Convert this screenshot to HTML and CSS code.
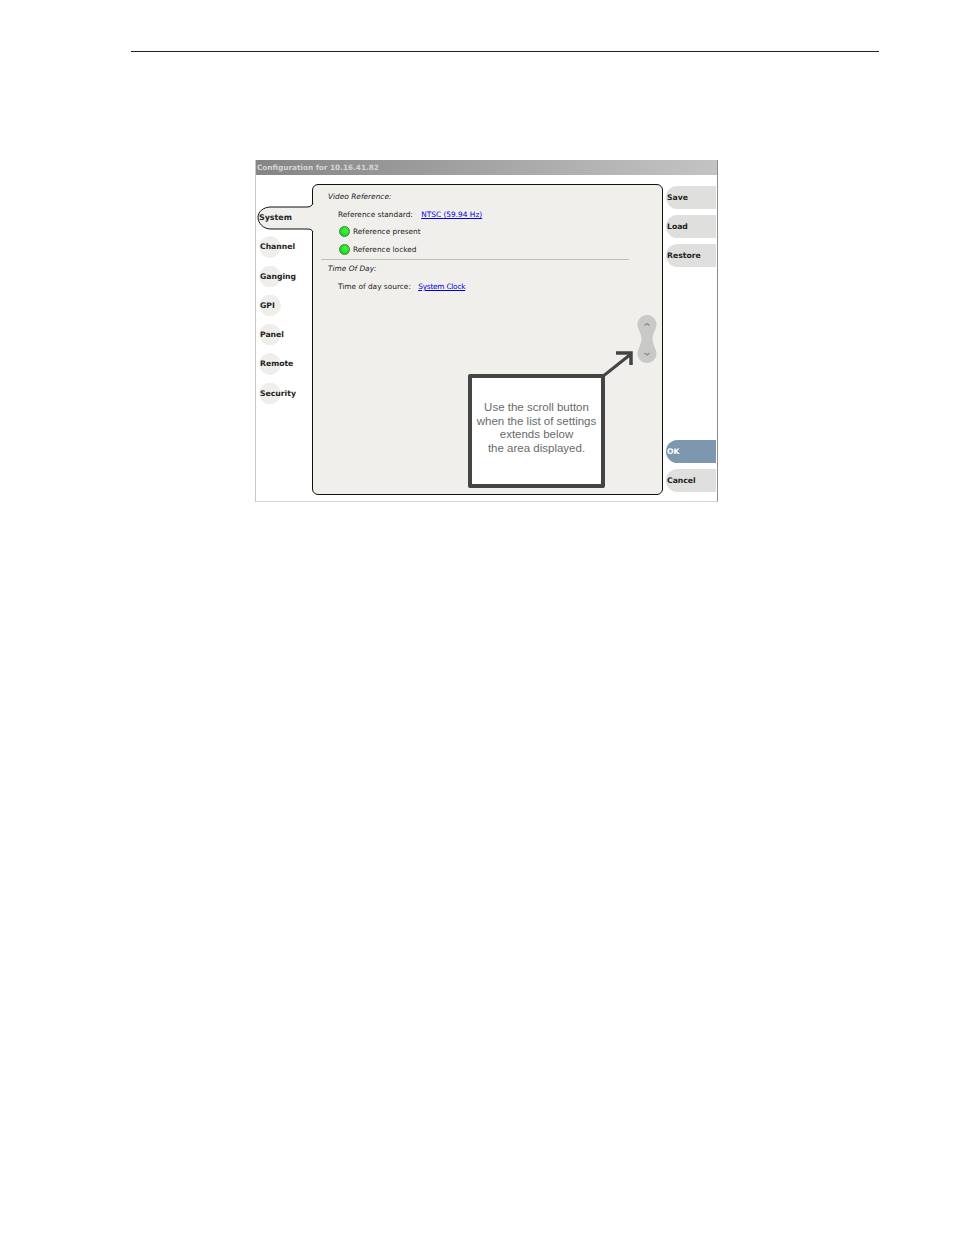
FILE: index.html
```html
<!DOCTYPE html>
<html lang="en">
<head>
  <meta charset="UTF-8" />
  <title>Configuration</title>
  <link rel="stylesheet" href="styles.css">
</head>
<body>
  <div class="page-rule"></div>
  <div class="window">
    <div class="titlebar">Configuration for 10.16.41.82</div>
    <div class="window-body">
      <ul class="nav">
        <li class="nav-item nav-active">System</li>
        <li class="nav-item">Channel</li>
        <li class="nav-item">Ganging</li>
        <li class="nav-item">GPI</li>
        <li class="nav-item">Panel</li>
        <li class="nav-item">Remote</li>
        <li class="nav-item">Security</li>
      </ul>
      <div class="panel">
        <!-- active tab joins the panel edge -->
        <svg class="tab-shape" width="58" height="30" viewBox="0 0 58 30">
          <path d="M56 1 C55 4 53 5 50 5 L14 5 C6 5 1 10 1 15 C1 21 6 27 14 27 L50 27 C54 27 55 28 56 30 L58 30 L58 1 Z" fill="#f0efec"/>
          <path d="M56 1 C55 4 53 5 50 5 L14 5 C6 5 1 10 1 15 C1 21 6 27 14 27 L50 27 C54 27 55 28 56 30" fill="none" stroke="#111" stroke-width="1"/>
        </svg>
        <div class="tab-label">System</div>

        <div class="row heading">Video Reference:</div>
        <div class="row setting">Reference standard: <a class="value-link link-standard" href="#">NTSC (59.94 Hz)</a></div>
        <div class="row status"><span class="led"></span>Reference present</div>
        <div class="row status"><span class="led"></span>Reference locked</div>
        <div class="divider"></div>
        <div class="row heading heading-second">Time Of Day:</div>
        <div class="row setting">Time of day source: <a class="value-link link-clock" href="#">System Clock</a></div>

        <svg class="scroll-btn" width="20" height="48" viewBox="0 0 20 48">
          <path d="M10 0 C15.5 0 19.5 4.5 19.5 9.5 C19.5 14 16 17 15.5 24 C16 31 19.5 34 19.5 38.5 C19.5 43.5 15.5 48 10 48 C4.5 48 0.5 43.5 0.5 38.5 C0.5 34 4 31 4.5 24 C4 17 0.5 14 0.5 9.5 C0.5 4.5 4.5 0 10 0 Z" fill="#c9c9c7"/>
          <path d="M7.5 10.5 L10 8.5 L12.5 10.5" fill="none" stroke="#8a8a88" stroke-width="1.3"/>
          <path d="M7.5 38 L10 40 L12.5 38" fill="none" stroke="#8a8a88" stroke-width="1.3"/>
        </svg>
        <svg class="callout-arrow" width="36" height="28" viewBox="0 0 36 28">
          <path d="M2 26 L31 3" fill="none" stroke="#444" stroke-width="3"/>
          <path d="M16 2 L31 2 L31 14" fill="none" stroke="#444" stroke-width="3.5"/>
        </svg>
        <div class="callout">Use the scroll button<br>when the list of settings<br>extends below<br>the area displayed.</div>
      </div>
      <div class="actions">
        <button class="action">Save</button>
        <button class="action">Load</button>
        <button class="action">Restore</button>
        <button class="action action-ok">OK</button>
        <button class="action">Cancel</button>
      </div>
    </div>
  </div>
</body>
</html>
```

FILE: styles.css
```css
body {
  margin: 0;
  padding-top: 51px;
  background: #fff;
  font-family: "DejaVu Sans", sans-serif;
  color: #222;
}
.page-rule {
  height: 1px;
  margin: 0 75px 0 131px;
  background: #222;
}
.window {
  box-sizing: border-box;
  width: 463px;
  height: 342px;
  margin: 108px 0 0 255px;
  border-left: 1px solid #c8c8c8;
  border-right: 1px solid #8c8c8c;
  border-bottom: 1px solid #d4d4d4;
}
.titlebar {
  height: 15px;
  padding-left: 1px;
  line-height: 16px;
  font-size: 7.3px;
  font-weight: bold;
  color: #d4d4d4;
  background: linear-gradient(90deg, #858585, #c4c4c4);
  white-space: nowrap;
}
.window-body {
  display: flex;
  padding-top: 9px;
}
/* left tabs */
.nav {
  list-style: none;
  width: 56px;
  margin: 0;
  padding: 19px 0 0;
}
.nav-item {
  height: 29.3px;
  padding-left: 4px;
  line-height: 29.3px;
  font-size: 7.7px;
  font-weight: bold;
  background: radial-gradient(circle 11px at 14px 50%, #efeeeb 10.5px, transparent 11px);
}
.nav-active {
  visibility: hidden;
}
.panel {
  box-sizing: border-box;
  position: relative;
  width: 351px;
  height: 311px;
  padding-top: 2px;
  background: #f0efec;
  border: 1px solid #111;
  border-radius: 6px;
  font-size: 7.4px;
}
.tab-shape {
  position: absolute;
  left: -56px;
  top: 17px;
}
.tab-label {
  position: absolute;
  left: -54px;
  top: 27px;
  font-size: 7.9px;
  font-weight: bold;
  line-height: 12px;
}
.row {
  height: 18px;
  line-height: 20px;
  white-space: nowrap;
}
.heading {
  padding-left: 15px;
  font-style: italic;
}
.heading-second {
  height: 16px;
  margin-bottom: 1px;
  line-height: 18px;
}
.setting {
  padding-left: 25px;
}
.value-link {
  color: #0000e0;
}
.link-standard {
  margin-left: 6px;
}
.link-clock {
  margin-left: 5px;
  letter-spacing: -0.25px;
}
.status {
  display: flex;
  align-items: center;
  padding-left: 26px;
}
.led {
  box-sizing: border-box;
  flex: none;
  width: 11px;
  height: 11px;
  margin: -1px 3px 0 0;
  border-radius: 50%;
  border: 1px solid #4a7a4a;
  background: radial-gradient(circle at 60% 40%, #3dff3d, #0ec40e);
}
.divider {
  height: 1px;
  margin: 0 33px 0 8px;
  background: #bdbcb8;
}
.scroll-btn {
  position: absolute;
  left: 323.5px;
  top: 130px;
}
.callout-arrow {
  position: absolute;
  left: 287px;
  top: 166px;
}
.callout {
  box-sizing: border-box;
  position: absolute;
  left: 155px;
  top: 189px;
  width: 137px;
  height: 114px;
  padding-top: 23px;
  background: #fff;
  border: 4px solid #444;
  border-radius: 2px;
  font-family: "Liberation Sans", sans-serif;
  font-size: 11.5px;
  line-height: 13.7px;
  text-align: center;
  color: #6a6a6a;
}
/* right buttons */
.actions {
  display: flex;
  flex-direction: column;
  gap: 6px;
  width: 50px;
  margin-left: 3px;
  padding: 2px 0 3px;
}
.action {
  height: 23px;
  padding: 0 0 0 1px;
  border: none;
  border-radius: 12px 0 0 12px;
  background: #dfdfdd;
  font-family: inherit;
  font-size: 7.7px;
  font-weight: bold;
  text-align: left;
  color: #222;
}
.action-ok {
  margin-top: auto;
  background: #7d98ae;
  color: #fff;
}
```
